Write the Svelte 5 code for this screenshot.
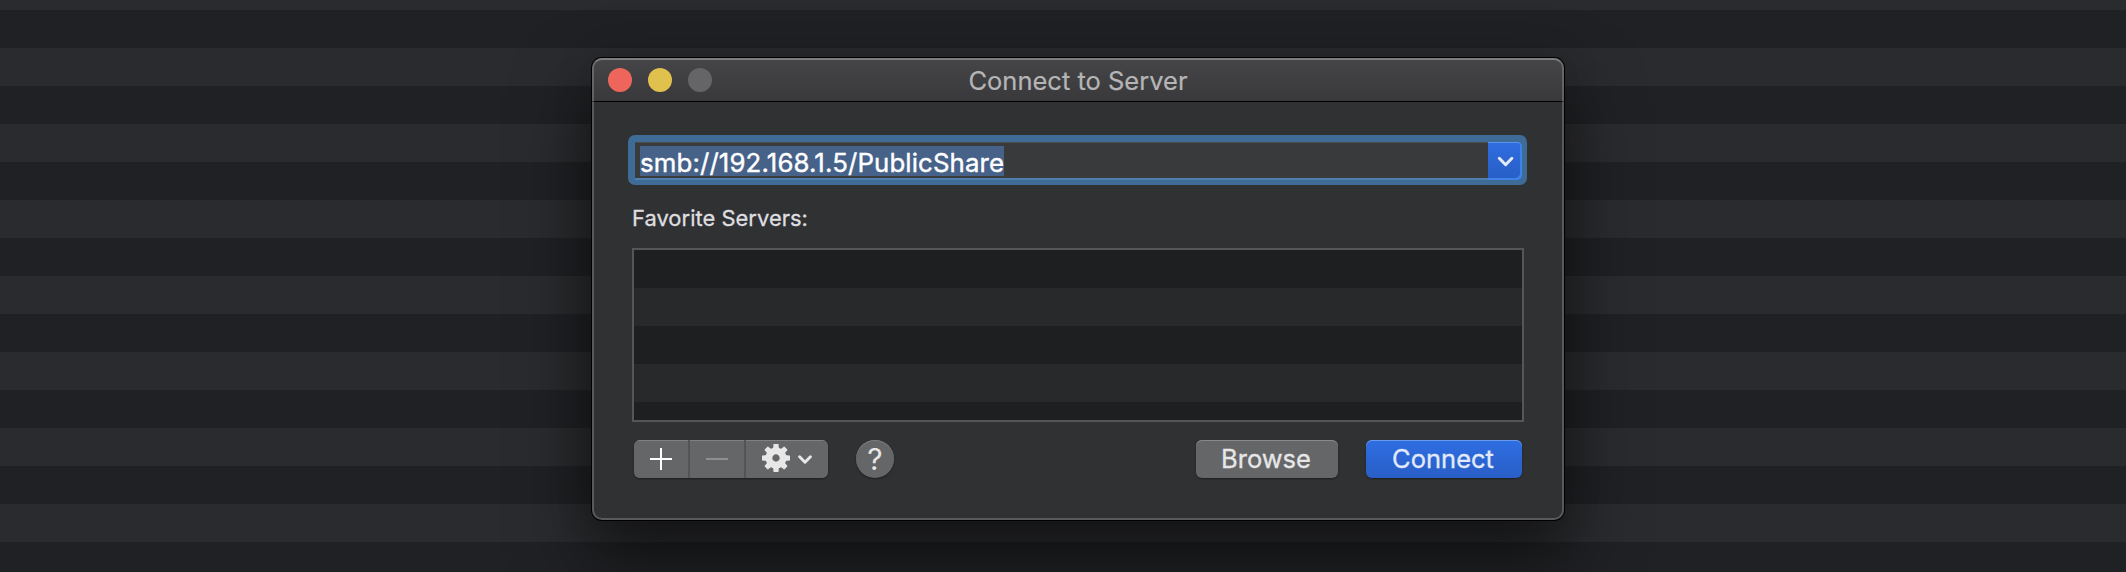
<script>
  let address = $state('smb://192.168.1.5/PublicShare');
  const teeth = [0, 45, 90, 135, 180, 225, 270, 315];
</script>

<main class="desktop">
  <section class="window">
    <header class="titlebar">
      <div class="lights">
        <span class="light close"></span>
        <span class="light minimize"></span>
        <span class="light zoom"></span>
      </div>
      <h1>Connect to Server</h1>
    </header>

    <div class="content">
      <div class="combo">
        <div class="field"><span class="selection"><span class="address">{address}</span></span></div>
        <button class="drop" aria-label="Show recent servers">
          <svg width="34" height="38" viewBox="0 0 34 38"><path d="M11.3 16.3 17.6 22.7 23.9 16.3" /></svg>
        </button>
      </div>

      <p class="label"><span>Favorite Servers:</span></p>
      <div class="list"></div>

      <footer class="actions">
        <div class="segments">
          <button class="add" aria-label="Add">
            <svg width="54" height="38" viewBox="0 0 54 38"><path d="M16 19H38M27 8V30" /></svg>
          </button>
          <button class="remove" aria-label="Remove">
            <svg width="54" height="38" viewBox="0 0 54 38"><path d="M16 19H38" /></svg>
          </button>
          <button class="more" aria-label="Options">
            <svg width="82" height="38" viewBox="0 0 82 38">
              <g transform="translate(30 18)">
                <circle r="7.1" fill="none" stroke="#e7e7e8" stroke-width="6.8" />
                {#each teeth as angle}
                  <path class="tooth" transform="rotate({angle})" d="M-3 -8.5 -2.5 -13.5Q-2.4 -14 -1.9 -14H1.9Q2.4 -14 2.5 -13.5L3 -8.5Z" />
                {/each}
              </g>
              <path class="chevron" d="M53.6 16.8 59 22.2 64.4 16.8" />
            </svg>
          </button>
        </div>
        <button class="help" aria-label="Help"><span>?</span></button>
        <div class="choices">
          <button class="push browse"><span>Browse</span></button>
          <button class="push connect"><span>Connect</span></button>
        </div>
      </footer>
    </div>
  </section>
</main>

<style>
  :global(body) {
    margin: 0;
    background: #202124;
  }

  .desktop {
    box-sizing: border-box;
    width: 2126px;
    height: 572px;
    padding: 58px 0 0 592px;
    overflow: hidden;
    font-family: Inter, 'Liberation Sans', sans-serif;
    background: repeating-linear-gradient(#2a2b2e 0 38px, #202124 38px 76px) 0 -28px / 100% 608px;
  }

  .window {
    position: relative;
    width: 972px;
    height: 462px;
    border-radius: 10px;
    background: #303133;
    box-shadow: 0 0 0 1px #000, 0 36px 72px 4px rgba(0, 0, 0, 0.52), 0 0 40px rgba(0, 0, 0, 0.12);
  }

  .window::after {
    content: '';
    position: absolute;
    inset: 0;
    border: 2px solid rgba(255, 255, 255, 0.2);
    border-top-color: rgba(255, 255, 255, 0.3);
    border-radius: 10px;
    pointer-events: none;
  }

  .titlebar {
    box-sizing: border-box;
    display: grid;
    grid-template-columns: 1fr auto 1fr;
    align-items: center;
    height: 44px;
    padding: 0 16px;
    border-bottom: 1px solid #000;
    border-radius: 10px 10px 0 0;
    background: linear-gradient(#464648, #39393b);
  }

  .lights {
    display: flex;
    gap: 16px;
    padding-top: 1px;
  }

  .light {
    width: 24px;
    height: 24px;
    border-radius: 50%;
  }

  .close { background: #ee665b; }
  .minimize { background: #e1c14d; }
  .zoom { background: #656567; }

  h1 {
    margin: 0;
    font-size: 25.5px;
    font-weight: 400;
    line-height: 30px;
    letter-spacing: 0;
    color: #b5b5b6;
    -webkit-text-stroke: 0.2px #b5b5b6;
    padding-top: 2px;
  }

  .content {
    padding: 33px 37px 0 36px;
  }

  .combo {
    box-sizing: border-box;
    display: flex;
    width: 899px;
    height: 50px;
    padding: 7px 5px 5px 7px;
    border-radius: 7px;
    background: #3f6c97;
  }

  .field {
    box-sizing: border-box;
    flex: 1;
    padding: 3px 0 0 5px;
    border-top: 1px solid #4d4c4d;
    border-bottom: 2px solid #4e7fae;
    background: #393a3c;
  }

  .selection {
    display: block;
    box-sizing: border-box;
    width: 364px;
    height: 30px;
    background: #466289;
    white-space: nowrap;
  }

  .address {
    display: block;
    font-size: 25.8px;
    line-height: 33px;
    letter-spacing: 0.13px;
    color: #fff;
    -webkit-text-stroke: 0.4px #fff;
  }

  button {
    padding: 0;
    border: 0;
    font-family: inherit;
  }

  svg {
    display: block;
    fill: none;
  }

  .drop {
    width: 34px;
    height: 38px;
    border-radius: 0 5px 5px 0;
    background: linear-gradient(#2f6de0, #285ec5);
    box-shadow: inset -2px -2px #3e83e8, inset 0 1px #5b92ea;
  }

  .drop path,
  .chevron {
    stroke: #e4ebf9;
    stroke-width: 3;
    stroke-linecap: round;
    stroke-linejoin: round;
  }

  .label {
    height: 28px;
    margin: 19px 0 16px 4px;
    font-size: 21.9px;
    line-height: 28px;
    letter-spacing: 0.04px;
    color: #dfdfe0;
    -webkit-text-stroke: 0.3px #dfdfe0;
  }

  .list {
    box-sizing: border-box;
    width: 892px;
    height: 174px;
    margin-left: 4px;
    border: 2px solid #555658;
    background: repeating-linear-gradient(#1e1f21 0 38px, #28292b 38px 76px);
  }

  .actions {
    display: flex;
    align-items: center;
    margin: 18px 5px 0 6px;
  }

  .segments {
    display: flex;
    gap: 2px;
    height: 38px;
    border-radius: 6px;
    overflow: hidden;
    background: #535456;
    box-shadow: 0 1px 2px rgba(0, 0, 0, 0.4);
  }

  .segments button,
  .help,
  .browse {
    background: #656668;
    box-shadow: inset 0 1px #808183;
  }

  .add path,
  .remove path {
    stroke: #fff;
    stroke-width: 2;
  }

  .remove path { stroke: #8e8f91; }
  .tooth { fill: #e7e7e8; }
  .chevron { stroke: #e7e7e8; }

  .help {
    width: 38px;
    height: 38px;
    margin-left: 28px;
    border-radius: 50%;
    font-size: 30px;
    line-height: 38px;
    color: #e7e7e8;
    box-shadow: inset 0 1px #7b7c7e, 0 1px 2px rgba(0, 0, 0, 0.4);
  }

  .choices {
    display: flex;
    gap: 28px;
    margin-left: auto;
  }

  .push {
    height: 38px;
    padding-right: 2px;
    border-radius: 6px;
    font-size: 25.5px;
    line-height: 38px;
    color: #e7e7e8;
    -webkit-text-stroke: 0.3px currentColor;
  }

  .browse {
    width: 142px;
    box-shadow: inset 0 1px #88898b, 0 1px 2px rgba(0, 0, 0, 0.4);
  }

  .connect {
    width: 156px;
    color: #e2eafb;
    background: linear-gradient(#2e6ee2, #295ec6);
    box-shadow: inset 0 1px #6b9bed, 0 1px 2px rgba(0, 0, 0, 0.4);
  }
</style>
